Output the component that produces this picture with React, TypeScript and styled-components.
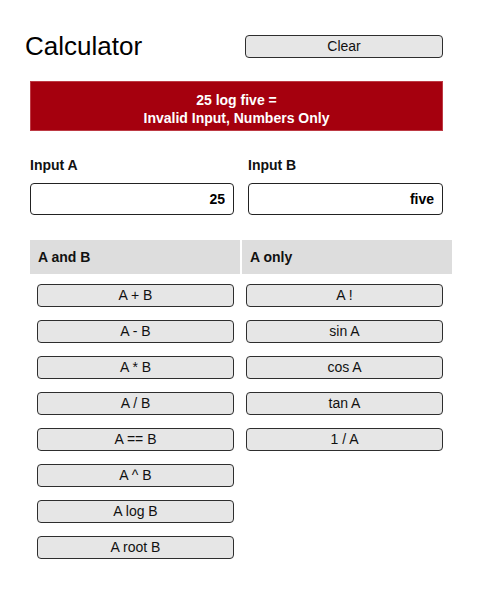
import React from "react";
import styled, { createGlobalStyle } from "styled-components";

const GlobalStyle = createGlobalStyle`
  html, body { margin: 0; padding: 0; background: #ffffff; }
  body { font-family: "Liberation Sans", Arial, sans-serif; color: #000; }
  * { box-sizing: border-box; }
`;

const Page = styled.div`
  width: 480px;
  padding: 31px 0 0 30px;
`;

const HeaderRow = styled.div`
  display: flex;
  align-items: center;
  width: 413px;
  height: 30px;
`;

const Title = styled.h1`
  margin: 0 0 0 -5px;
  width: 220px;
  font-size: 26px;
  font-weight: 400;
  line-height: 30px;
`;

const Button = styled.button<{ $w?: number }>`
  display: block;
  width: ${(p) => p.$w ?? 197}px;
  height: 23px;
  padding: 0;
  border: 1px solid #2e2e2e;
  border-radius: 4px;
  background: #e6e6e6;
  color: #111;
  font-family: "Liberation Sans", Arial, sans-serif;
  font-size: 14px;
  line-height: 21px;
  text-align: center;
  cursor: pointer;
`;

const Banner = styled.div`
  margin-top: 20px;
  width: 413px;
  height: 50px;
  padding: 9px 0 0;
  background: #a5000e;
  border: 1px solid #bd3a44;
  color: #ffffff;
  font-size: 14px;
  font-weight: 700;
  line-height: 18px;
  text-align: center;
`;

const InputsRow = styled.div`
  display: flex;
  gap: 14px;
  margin-top: 26px;
`;

const Field = styled.div<{ $w: number }>`
  display: flex;
  flex-direction: column;
  width: ${(p) => p.$w}px;
`;

const Label = styled.label`
  font-size: 14px;
  font-weight: 700;
  line-height: 16px;
  color: #111;
`;

const TextInput = styled.input`
  margin-top: 10px;
  width: 100%;
  height: 32px;
  padding: 0 8px;
  border: 1px solid #222;
  border-radius: 4px;
  background: #fff;
  font-family: "Liberation Sans", Arial, sans-serif;
  font-size: 14px;
  font-weight: 700;
  color: #000;
  text-align: right;
  outline: none;
`;

const OpsGrid = styled.div`
  display: grid;
  grid-template-columns: 210px 210px;
  column-gap: 2px;
  margin-top: 25px;
`;

const ColHead = styled.div`
  height: 34px;
  padding-left: 8px;
  background: #dddddd;
  font-size: 14px;
  font-weight: 700;
  line-height: 34px;
  color: #111;
`;

const ButtonCol = styled.div<{ $indent: number }>`
  display: flex;
  flex-direction: column;
  gap: 13px;
  padding: 10px 0 0 ${(p) => p.$indent}px;
`;

const bothOps = ["A + B", "A - B", "A * B", "A / B", "A == B", "A ^ B", "A log B", "A root B"];
const aOps = ["A !", "sin A", "cos A", "tan A", "1 / A"];

export default function App() {
  return (
    <>
      <GlobalStyle />
      <Page>
        <HeaderRow>
          <Title>Calculator</Title>
          <Button $w={198}>Clear</Button>
        </HeaderRow>
        <Banner>
          25 log five =
          <br />
          Invalid Input, Numbers Only
        </Banner>
        <InputsRow>
          <Field $w={204}>
            <Label>Input A</Label>
            <TextInput defaultValue="25" />
          </Field>
          <Field $w={195}>
            <Label>Input B</Label>
            <TextInput defaultValue="five" />
          </Field>
        </InputsRow>
        <OpsGrid>
          <ColHead>A and B</ColHead>
          <ColHead>A only</ColHead>
          <ButtonCol $indent={7}>
            {bothOps.map((op) => (
              <Button key={op}>{op}</Button>
            ))}
          </ButtonCol>
          <ButtonCol $indent={4}>
            {aOps.map((op) => (
              <Button key={op}>{op}</Button>
            ))}
          </ButtonCol>
        </OpsGrid>
      </Page>
    </>
  );
}
